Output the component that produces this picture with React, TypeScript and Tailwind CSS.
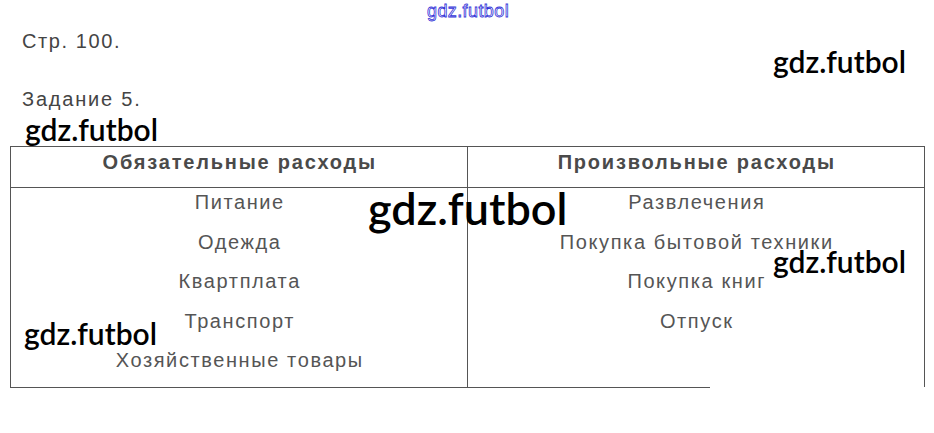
import React from 'react';

const left = ['Питание', 'Одежда', 'Квартплата', 'Транспорт', 'Хозяйственные товары'];
const right = ['Развлечения', 'Покупка бытовой техники', 'Покупка книг', 'Отпуск'];

const Mark: React.FC<{ className: string }> = ({ className }) => (
  <div
    className={`absolute text-black font-semibold leading-none ${className}`}
    style={{ fontFamily: 'Lato, "Open Sans", sans-serif' }}
  >
    gdz.futbol
  </div>
);

export default function App() {
  return (
    <div
      className="relative w-[934px] h-[433px] bg-white overflow-hidden"
      style={{ fontFamily: '"Liberation Sans", Arial, sans-serif' }}
    >
      {/* top link */}
      <div className="flex justify-center pt-[1px] pl-[2px]">
        <span className="text-[18px] leading-[20px] tracking-[0.4px] text-transparent [-webkit-text-stroke:0.8px_#3434d8]">
          gdz.futbol
        </span>
      </div>

      <div className="pl-[22px] pt-[8px] text-[20px] leading-6 tracking-[1.6px] text-[#444]">Стр. 100.</div>
      <div className="pl-[22px] pt-[34px] text-[20px] leading-6 tracking-[1.8px] text-[#444]">Задание 5.</div>

      {/* table */}
      <div className="ml-[10px] mt-[35px] w-[915px]">
        <div className="border border-b-0 border-[#555]">
          <div className="grid grid-cols-2 border-b border-[#555] h-[41px]">
            <div className="border-r border-[#555] text-center pt-[3px] pl-[2px] text-[20px] leading-6 tracking-[1.8px] font-bold text-[#4a4a4a]">
              Обязательные расходы
            </div>
            <div className="text-center pt-[3px] pl-[2px] text-[20px] leading-6 tracking-[1.8px] font-bold text-[#4a4a4a]">
              Произвольные расходы
            </div>
          </div>
          <div className="grid grid-cols-2">
            <div className="border-r border-[#555] flex flex-col items-center gap-[15.5px] pt-[2px] pb-[15px] pl-[2px] text-[20px] leading-6 tracking-[1.6px] text-[#555]">
              {left.map((t) => (
                <div key={t}>{t}</div>
              ))}
            </div>
            <div className="flex flex-col items-center gap-[15.5px] pt-[2px] pl-[2px] text-[20px] leading-6 tracking-[1.6px] text-[#555]">
              {right.map((t) => (
                <div key={t}>{t}</div>
              ))}
            </div>
          </div>
        </div>
        <div className="w-[700px] border-t border-[#555]" />
      </div>

      {/* watermarks */}
      <Mark className="left-[773px] top-[46px] text-[30px]" />
      <Mark className="left-[25px] top-[114px] text-[30px]" />
      <Mark className="left-[368px] top-[186px] text-[45px]" />
      <Mark className="left-[773px] top-[246px] text-[30px]" />
      <Mark className="left-[24px] top-[318px] text-[30px]" />
    </div>
  );
}
